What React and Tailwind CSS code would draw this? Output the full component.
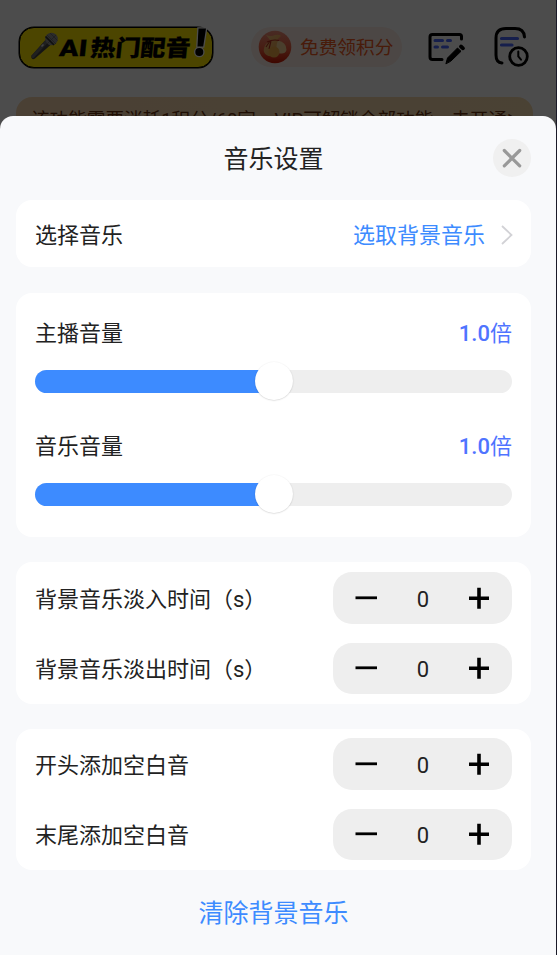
import React, { useState } from 'react';

function Logo() {
  return (
    <div className="relative flex items-center w-[194px] h-[41px] mt-[27px] rounded-[15px] border border-black bg-[#ffe600] shadow-[0_0_0_0.5px_#000]">
      <svg className="w-[28px] h-[28px] ml-[10px] -mt-[3px] shrink-0" viewBox="0 0 28 28">
        <path d="M15.5 8 L20.5 13 L5 26.5 Q3 27.8 1.8 26.5 Q0.6 25 1.8 23.3 Z" fill="#444" />
        <path d="M15.5 8 L18 10.5 L3.5 26 Q2 26.5 1.6 25 L2 23.3 Z" fill="#6b6b6b" />
        <path d="M11.5 14.5 L13.5 12.5" stroke="#ddd" strokeWidth="1.6" />
        <circle cx="21.5" cy="7" r="6.3" fill="#8f8f8f" />
        <path d="M17 3 L26 12 M20 1 L27.5 8.5 M26 3 L17 12" stroke="#666" strokeWidth="0.8" />
        <path d="M15.5 4.5 L24 13" stroke="#333" strokeWidth="1.6" />
      </svg>
      <span className="absolute left-[38px] top-[6px] flex items-center text-[25px] leading-[30px] font-black whitespace-nowrap -skew-x-6 origin-bottom-left text-black [-webkit-text-stroke:0.3px_#000]">
        <span className="w-[31px] scale-x-[1.12] scale-y-[0.92] origin-left">AI</span>
        <span className="scale-y-[0.9]">热门配音</span>
      </span>
      <svg className="absolute left-[171px] -top-[2px] w-[20px] h-[34px]" viewBox="0 0 20 34">
        <g fill="#000" stroke="#fff" strokeWidth="2.6" paintOrder="stroke">
          <path d="M7.5 2.5 L15 2.5 L12.2 20.5 L6.5 20.5 Z" />
          <circle cx="8.3" cy="26" r="4" />
        </g>
      </svg>
    </div>
  );
}

function CoinBag() {
  return (
    <svg className="w-[34px] h-[34px]" viewBox="0 0 34 34">
      <defs>
        <linearGradient id="coin" x1="0" y1="0" x2="0" y2="1">
          <stop offset="0" stopColor="#f0907a" />
          <stop offset="0.55" stopColor="#ef6040" />
          <stop offset="1" stopColor="#d01800" />
        </linearGradient>
        <linearGradient id="bag" x1="0" y1="0" x2="1" y2="1">
          <stop offset="0" stopColor="#f5c080" />
          <stop offset="1" stopColor="#eba040" />
        </linearGradient>
      </defs>
      <circle cx="17" cy="17" r="16.3" fill="url(#coin)" />
      <path d="M8 5 Q13 7 17 5 Q22 4 23 6 L19 10 Q22 13 21 20 L15 26 Q8 27 6 22 Q5 17 9 13 L12 10 Z" fill="url(#bag)" />
      <path d="M20 10.5 Q28.5 12 28.5 20 Q27 25 20 23 Q17 17 20 10.5 Z" fill="#f8d498" />
      <path d="M9 12 Q15 9 21 10.5 M12 11 L8 17 M13 11 L11 19" fill="none" stroke="#b83020" strokeWidth="1.1" />
      <circle cx="16" cy="22" r="5.5" fill="#f2ac48" />
    </svg>
  );
}

function EditIcon() {
  return (
    <svg className="w-[38px] h-[34px]" viewBox="0 0 38 34" fill="none" strokeLinecap="round">
      <path d="M33.5 8 V5.5 Q33.5 3.5 31.5 3.5 H4.5 Q2 3.5 2 6 V26 Q2 28.5 4.5 28.5 H14" stroke="#000" strokeWidth="3" />
      <path d="M7 9.5 H14.5 M19.5 9.5 H22.5 M7 16 H9.5 M14.5 16 H19.5" stroke="#4a68ff" strokeWidth="3" />
      <path d="M18 32.5 L19.5 27 L29.5 17 L33 20.3 L23 30 Z" fill="#000" stroke="#000" strokeWidth="1" strokeLinejoin="round" />
      <path d="M33 15.5 L35 17.3" stroke="#000" strokeWidth="3.8" />
    </svg>
  );
}

function HistoryIcon() {
  return (
    <svg className="w-[36px] h-[41px]" viewBox="0 0 36 41" fill="none" strokeLinecap="round">
      <path d="M30.5 11 Q30 2.5 21 2.5 H12 Q2 2.5 2 12 V29 Q2 36.5 8 37" stroke="#000" strokeWidth="3" />
      <path d="M7.5 12.5 H23.5 M7.5 19 H18" stroke="#4a68ff" strokeWidth="3.2" />
      <circle cx="24.5" cy="30.5" r="8.8" stroke="#000" strokeWidth="2.8" />
      <path d="M24.3 25.5 V30.5 L27 33.7" stroke="#000" strokeWidth="2" />
    </svg>
  );
}

function VolumeSlider({ label, value, onChange }) {
  const percent = (value / 2) * 100;
  return (
    <div>
      <div className="flex items-center justify-between h-[32px]">
        <span>{label}</span>
        <span className="font-medium text-[#4f74ff]">
          {value.toFixed(1)}<span className="font-normal">倍</span>
        </span>
      </div>
      <div className="relative h-[23.5px] mt-[20.5px] rounded-full bg-[#eeeeee]">
        <div className="h-full rounded-l-full bg-[#3d8bff]" style={{ width: `${percent}%` }} />
        <div
          className="absolute top-1/2 w-[38px] h-[38px] -translate-x-1/2 -translate-y-1/2 rounded-full bg-white shadow-[0_0.5px_1.5px_rgba(0,0,0,0.2)]"
          style={{ left: `${percent}%` }}
        />
        <input
          type="range"
          min="0"
          max="2"
          step="0.1"
          value={value}
          onChange={(e) => onChange(Number(e.target.value))}
          className="absolute inset-0 w-full opacity-0"
        />
      </div>
    </div>
  );
}

function Stepper({ label }) {
  const [count, setCount] = useState(0);
  return (
    <div className="flex items-center justify-between h-[51.5px]">
      <span className="pt-[3px]">{label}</span>
      <div className="flex items-center justify-between w-[179px] h-full px-[22px] rounded-[19px] bg-[#eeeeee]">
        <button type="button" onClick={() => setCount(Math.max(0, count - 1))}>
          <svg className="w-[23px] h-[22px]" viewBox="0 0 23 22">
            <path d="M0.5 10.8 H22" stroke="#000" strokeWidth="2.8" />
          </svg>
        </button>
        <span className="pt-[3px]">{count}</span>
        <button type="button" onClick={() => setCount(count + 1)}>
          <svg className="w-[22px] h-[22px]" viewBox="0 0 22 22">
            <path d="M1 11.3 H21 M11 0.8 V21.8" stroke="#000" strokeWidth="3.6" />
          </svg>
        </button>
      </div>
    </div>
  );
}

export default function App() {
  const [voice, setVoice] = useState(1);
  const [music, setMusic] = useState(1);

  return (
    <div className="relative w-full h-[955px] overflow-hidden bg-white font-[Roboto,'Noto_Sans_CJK_SC',sans-serif] text-[22px] text-[#222222]">
      {/* Page behind the sheet */}
      <div className="flex h-[97px] pl-[19px]">
        <Logo />
        <div className="flex items-center w-[151px] h-[40px] mt-[27px] ml-[38px] pl-[7px] gap-2 rounded-full bg-[#ffeee6]">
          <CoinBag />
          <span className="pt-[2px] text-[18.7px] text-[#f25a24] whitespace-nowrap">免费领积分</span>
        </div>
        <div className="mt-[31px] ml-[26px]"><EditIcon /></div>
        <div className="mt-[26px] ml-[28px]"><HistoryIcon /></div>
      </div>
      <div className="flex justify-between w-[517px] h-[60px] ml-4 pl-[15px] pr-[14px] pt-[9px] rounded-[16px] bg-gradient-to-r from-[#f7d7ae] to-[#f9dcae] text-[18.6px] leading-[28px] text-[#6b3410] whitespace-nowrap">
        <span>该功能需要消耗1积分/60字，VIP可解锁全部功能</span>
        <span>去开通<span className="text-[12px] align-[2px]">▶</span></span>
      </div>

      {/* Bottom sheet */}
      <div className="absolute inset-0 flex flex-col justify-end bg-black/70 border-r border-[#1a1a28]">
        <div className="w-full h-[839px] px-4 rounded-t-[13px] bg-[#f8f9fb]">
          <div className="grid grid-cols-[38px_1fr_38px] items-center h-[84px] pr-[9px]">
            <span />
            <h1 className="pt-[3px] text-[25px] text-center">音乐设置</h1>
            <button type="button" className="flex items-center justify-center w-[38px] h-[38px] rounded-full bg-[#f0f0f0]">
              <svg className="w-[20px] h-[20px]" viewBox="0 0 20 20">
                <path d="M2.3 2.5 L17.7 17.8 M17.7 2.5 L2.3 17.8" stroke="#999" strokeWidth="3.2" strokeLinecap="round" />
              </svg>
            </button>
          </div>

          <div className="w-[515px]">
            <div className="flex items-center h-[67px] pl-[19px] pr-[18px] rounded-2xl bg-white">
              <span className="flex-1 pt-[3px]">选择音乐</span>
              <span className="pt-[3px] text-[#3d8bff]">选取背景音乐</span>
              <svg className="w-[12px] h-[20px] mt-[2px] ml-4" viewBox="0 0 12 20" fill="none">
                <path d="M1 1 L10.5 10 L1 19" stroke="#d2d2d6" strokeWidth="1.8" />
              </svg>
            </div>

            <div className="flex flex-col gap-[37px] h-[244px] mt-[26px] px-[19px] pt-[24px] rounded-2xl bg-white">
              <VolumeSlider label="主播音量" value={voice} onChange={setVoice} />
              <VolumeSlider label="音乐音量" value={music} onChange={setMusic} />
            </div>

            <div className="flex flex-col gap-[19px] h-[142px] mt-[25px] px-[19px] pt-[10px] rounded-2xl bg-white">
              <Stepper label="背景音乐淡入时间（s）" />
              <Stepper label="背景音乐淡出时间（s）" />
            </div>

            <div className="flex flex-col gap-[19px] h-[141px] mt-[25px] px-[19px] pt-[9px] rounded-2xl bg-white">
              <Stepper label="开头添加空白音" />
              <Stepper label="末尾添加空白音" />
            </div>

            <button type="button" className="block w-full h-[85px] pt-[2px] text-[25px] text-[#3d8bff]">清除背景音乐</button>
          </div>
        </div>
      </div>
    </div>
  );
}
